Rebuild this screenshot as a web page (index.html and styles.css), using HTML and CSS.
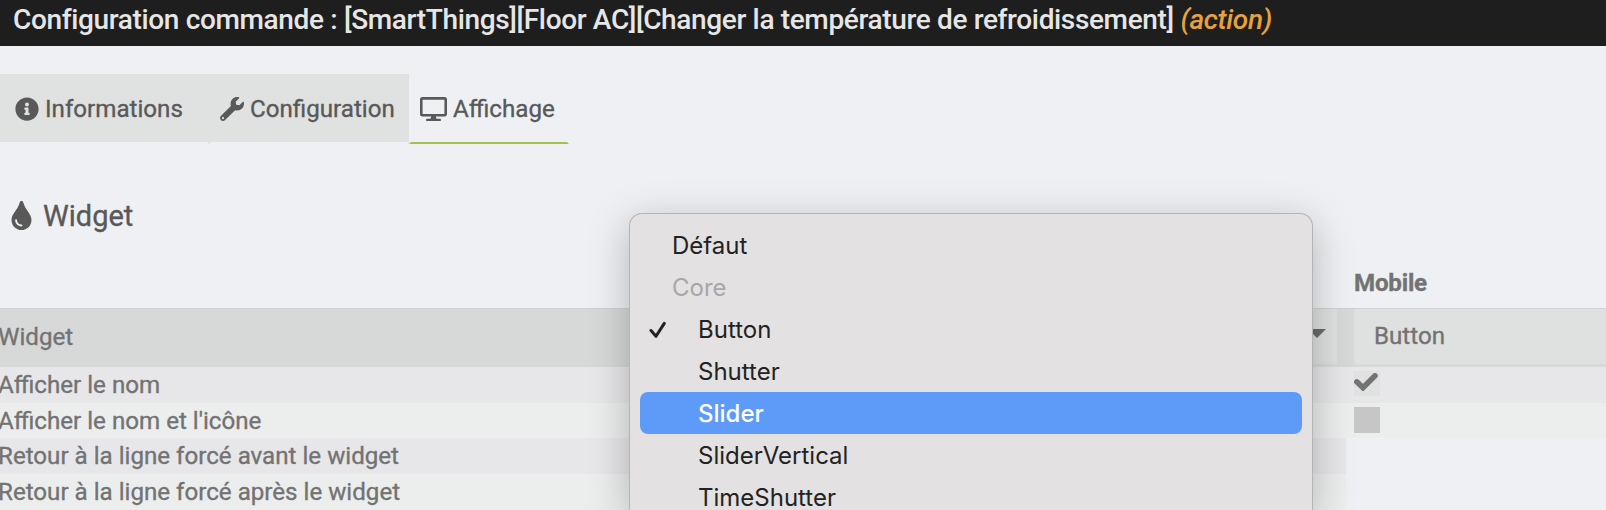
FILE: index.html
```html
<!DOCTYPE html>
<html lang="fr">
<head>
  <meta charset="UTF-8">
  <title>Configuration commande</title>
  <link rel="stylesheet" href="styles.css">
</head>
<body>
  <header class="title-bar">
    <span class="title">Configuration commande : [SmartThings][Floor AC][Changer la température de refroidissement]</span>
    <em class="type">(action)</em>
  </header>

  <nav class="tabs">
    <a class="tab tab-info">
      <svg class="icon" viewBox="0 0 512 512"><path d="M256 8C119.043 8 8 119.083 8 256c0 136.997 111.043 248 248 248s248-111.003 248-248C504 119.083 392.957 8 256 8zm0 110c23.196 0 42 18.804 42 42s-18.804 42-42 42-42-18.804-42-42 18.804-42 42-42zm56 254c0 6.627-5.373 12-12 12h-88c-6.627 0-12-5.373-12-12v-24c0-6.627 5.373-12 12-12h12v-64h-12c-6.627 0-12-5.373-12-12v-24c0-6.627 5.373-12 12-12h64c6.627 0 12 5.373 12 12v100h12c6.627 0 12 5.373 12 12v24z"/></svg>
      <span>Informations</span>
    </a>
    <a class="tab tab-config">
      <svg class="icon" viewBox="0 0 512 512"><path d="M507.73 109.1c-2.24-9.03-13.54-12.09-20.12-5.51l-74.36 74.36-67.88-11.31-11.31-67.88 74.36-74.36c6.62-6.62 3.43-17.9-5.66-20.16-47.38-11.74-99.55.91-136.58 37.93-39.64 39.64-50.55 97.1-34.05 147.2L18.74 402.76c-24.99 24.99-24.99 65.51 0 90.5 24.99 24.99 65.51 24.99 90.5 0l213.21-213.21c50.12 16.71 107.47 5.68 147.37-34.22 37.07-37.07 49.7-89.32 37.91-136.73zM64 472c-13.25 0-24-10.75-24-24 0-13.26 10.75-24 24-24s24 10.74 24 24c0 13.25-10.75 24-24 24z"/></svg>
      <span>Configuration</span>
    </a>
    <a class="tab tab-display active">
      <svg class="icon icon-wide" viewBox="0 0 576 512"><path d="M528 0H48C21.5 0 0 21.5 0 48v320c0 26.5 21.5 48 48 48h192l-16 48h-72c-13.3 0-24 10.7-24 24s10.7 24 24 24h272c13.3 0 24-10.7 24-24s-10.7-24-24-24h-72l-16-48h192c26.5 0 48-21.5 48-48V48c0-26.5-21.5-48-48-48zm-7 360H55V56h466v304z"/></svg>
      <span>Affichage</span>
    </a>
  </nav>

  <h2 class="legend">
    <svg class="drop" viewBox="0 0 352 512"><path d="M205.22 22.09c-7.94-28.78-49.44-30.12-58.44 0C100.01 179.85 0 222.72 0 333.91 0 432.35 78.72 512 176 512s176-79.65 176-178.09c0-111.75-99.79-153.34-146.78-311.82zM176 448c-61.75 0-112-50.25-112-112 0-8.84 7.16-16 16-16s16 7.16 16 16c0 44.11 35.89 80 80 80 8.84 0 16 7.16 16 16s-7.16 16-16 16z"/></svg>
    <span>Widget</span>
  </h2>

  <div class="table">
    <div class="row head">
      <div class="main"></div>
      <div class="mobile"><span>Mobile</span></div>
    </div>
    <div class="row widget">
      <div class="main">
        <span class="label">Widget</span>
        <div class="select select-desktop"><i class="caret"></i></div>
      </div>
      <div class="mobile"><div class="select select-mobile"><span>Button</span></div></div>
    </div>
    <div class="row odd">
      <div class="main"><span class="label">Afficher le nom</span></div>
      <div class="mobile">
        <span class="checkbox checked"><svg class="check" viewBox="0 0 24 18"><path d="M2.8 8.8l6.2 6 12-12"/></svg></span>
      </div>
    </div>
    <div class="row even">
      <div class="main"><span class="label">Afficher le nom et l'icône</span></div>
      <div class="mobile"><span class="checkbox"></span></div>
    </div>
    <div class="row odd half">
      <div class="main"><span class="label">Retour à la ligne forcé avant le widget</span></div>
    </div>
    <div class="row even half">
      <div class="main"><span class="label">Retour à la ligne forcé après le widget</span></div>
    </div>
  </div>

  <ul class="menu">
    <li class="item">Défaut</li>
    <li class="item group">Core</li>
    <li class="item option">
      <svg class="tick" viewBox="0 0 18 18"><path d="M2 9.5l5 5.8L15.3 2.4"/></svg>
      Button
    </li>
    <li class="item option">Shutter</li>
    <li class="item option selected">Slider</li>
    <li class="item option">SliderVertical</li>
    <li class="item option last">TimeShutter</li>
  </ul>
</body>
</html>
```
FILE: styles.css
```css
* {
  box-sizing: border-box;
}
body {
  margin: 0;
  height: 510px;
  overflow: hidden;
  position: relative;
  background-color: #eff0f3;
  color: #737373;
  font-family: Roboto, sans-serif;
  font-size: 24.15px;
  white-space: nowrap;
  -webkit-text-stroke: 0.35px;
}
.title-bar {
  height: 46px;
  padding-left: 13px;
  background-color: #1e1e1e;
  color: #e6e6e6;
  font-size: 28px;
  font-weight: 500;
  letter-spacing: -0.35px;
  line-height: 40px;
  -webkit-text-stroke: 0;
}
.type {
  color: #e6a23c;
}

/* tabs */
.tabs {
  display: flex;
  margin-top: 28px;
  color: #595959;
}
.tab {
  display: flex;
  align-items: center;
  height: 70px;
  border: 2px solid #e0e2e1;
  border-bottom-color: #eff0f3;
  background-color: #e0e2e1;
  background-clip: padding-box;
}
.tab-info {
  width: 209px;
  padding-left: 15px;
  border-left: 0;
}
.tab-config {
  width: 200px;
  padding-left: 9px;
}
.tab-display {
  width: 160px;
  padding-left: 9px;
}
.tab.active {
  background-color: #eff0f3;
  border-color: #eff0f3;
  border-bottom-color: #a0c34b;
}
.icon {
  width: 24px;
  height: 24px;
  margin-right: 6px;
  fill: #595959;
}
.icon-wide {
  width: 27px;
}

.legend {
  display: flex;
  align-items: center;
  height: 40px;
  margin: 52px 0 0 11px;
  color: #595959;
  font-size: 29px;
  font-weight: 400;
}
.drop {
  width: 21px;
  height: 29px;
  margin: -2px 11px 0 0;
  fill: #595959;
}

/* settings table */
.table {
  margin-top: 32px;
}
.row {
  display: flex;
  height: 36px;
}
.main {
  display: flex;
  align-items: center;
  justify-content: space-between;
  width: 1346px;
}
.mobile {
  display: flex;
  align-items: center;
  flex: 1;
  padding-left: 8px;
}
.label {
  margin-left: -2px;
}
.head {
  height: 40px;
  font-weight: 700;
  letter-spacing: -0.2px;
}
.head .mobile {
  padding-bottom: 10px;
}
.widget {
  height: 59px;
  border-top: 1px solid #d0d2d1;
  background-color: #d7d9d8;
}
.widget .main, .widget .mobile {
  padding-bottom: 3px;
}
.select {
  display: flex;
  align-items: center;
  height: 55px;
  background-color: #dfe1e0;
}
.select-desktop {
  justify-content: flex-end;
  width: 640px;
  margin-right: 9px;
  padding-right: 11px;
}
.select-mobile {
  flex: 1;
  padding: 0 0 2px 20px;
}
.caret {
  margin-top: -7px;
  border: 9px solid transparent;
  border-top-color: #6b6b6b;
  border-bottom: 0;
}
.odd {
  background-color: #e7e7e9;
}
.even {
  height: 35px;
  background-color: #eceeed;
}
.half {
  width: 1346px;
  height: 36px;
}
.checkbox {
  width: 26px;
  height: 26px;
  margin-bottom: 2px;
  background-color: #c6c6c6;
}
.checkbox.checked {
  height: 25px;
  margin-bottom: 3px;
  background-color: #e0e2e1;
}
.check {
  display: block;
  width: 24px;
  height: 18px;
  margin-top: 2px;
  fill: none;
  stroke: #737373;
  stroke-width: 5.5;
  stroke-linecap: round;
}

/* dropdown opened over the desktop select */
.menu {
  position: absolute;
  top: 213px;
  bottom: 0;
  left: 629px;
  width: 684px;
  margin: 0;
  padding: 10px 10px 0;
  list-style: none;
  border: 1px solid #b4b4b5;
  border-bottom: 0;
  border-radius: 13px 13px 0 0;
  background-color: #e3e1e2;
  color: #222;
  font-family: Inter, sans-serif;
  font-size: 24px;
  box-shadow: 0 10px 40px rgba(0, 0, 0, 0.25);
  -webkit-text-stroke: 0;
}
.item {
  position: relative;
  height: 42px;
  padding-left: 32px;
  line-height: 44px;
}
.option {
  padding-left: 58px;
}
.group {
  color: #a8a7a8;
}
.selected {
  border-radius: 8px;
  background-color: #5e9bf8;
  color: white;
  font-weight: 500;
}
.last {
  height: 34px;
  padding-top: 7px;
  line-height: 30px;
}
.tick {
  position: absolute;
  top: 13px;
  left: 9px;
  width: 18px;
  height: 18px;
  fill: none;
  stroke: #222;
  stroke-width: 3;
  stroke-linecap: round;
  stroke-linejoin: round;
}
```
